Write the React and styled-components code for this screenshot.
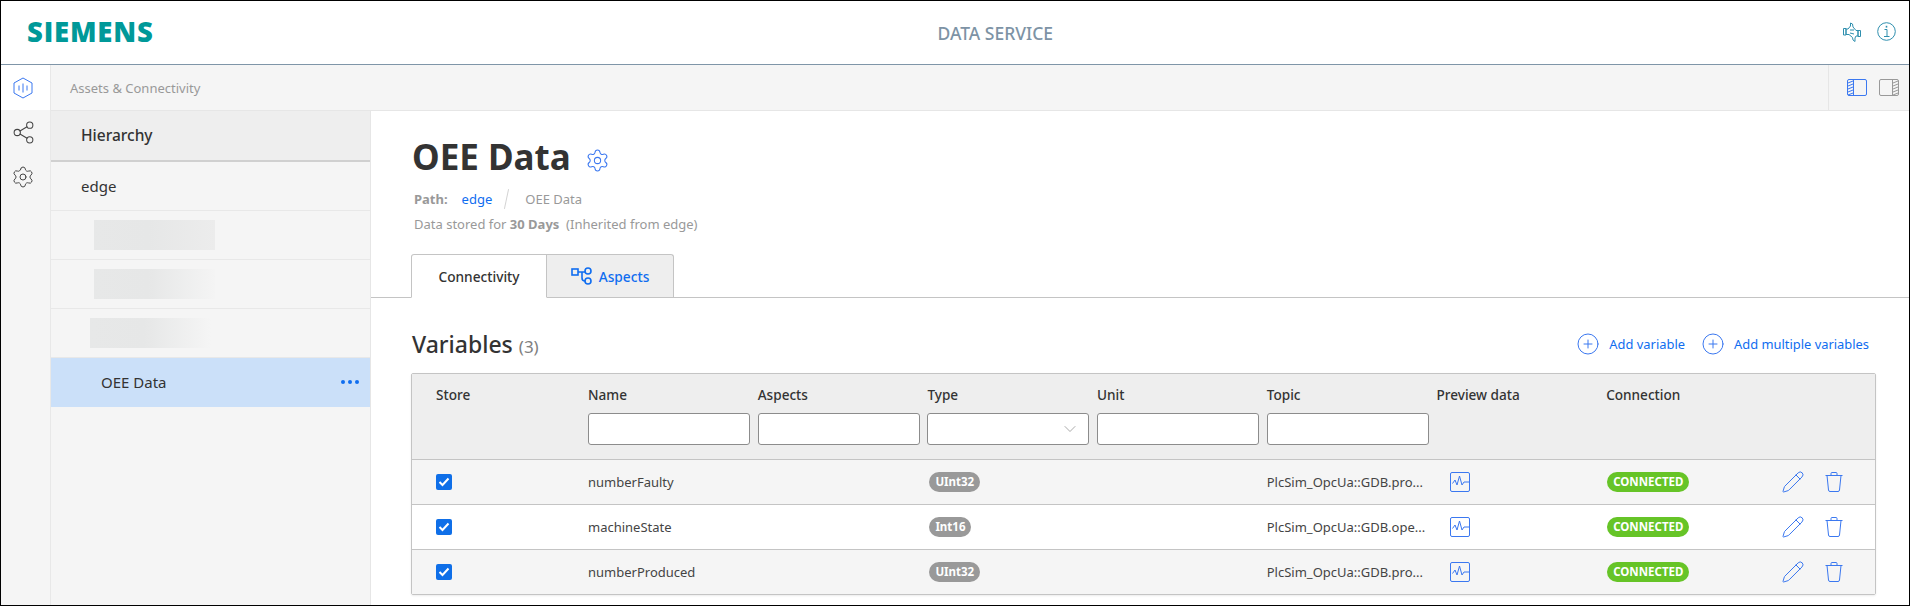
import React from 'react';
import styled, { createGlobalStyle } from 'styled-components';
import { ChevronDown, CirclePlus, Pencil, Settings, Share2 } from 'lucide-react';

const Global = createGlobalStyle`
  * { box-sizing: border-box; }
  html, body { margin: 0; padding: 0; background: #fff; }
  body { font-family: "Noto Sans", "Open Sans", sans-serif; color: #333; }
`;

const BLUE = '#0f6df0';
const LINE = '#c4c4c4';

const Frame = styled.div`
  width: 1910px;
  height: 606px;
  border: 1px solid #000;
  display: flex;
  flex-direction: column;
  overflow: hidden;
  background: #fff;
`;

const TopBar = styled.header`
  height: 64px;
  flex: none;
  border-bottom: 1px solid #7f95a8;
  display: flex;
  align-items: center;
  justify-content: space-between;
  padding: 0 13px 0 26px;
`;

const Logo = styled.div`
  font-family: "Open Sans", sans-serif;
  font-weight: 800;
  font-size: 27.5px;
  letter-spacing: 0.8px;
  color: #009999;
  line-height: 1;
  margin-top: -2px;
`;

const AppTitle = styled.div`
  font-size: 17.5px;
  font-weight: 500;
  color: #7d93a5;
  margin: 1px 6px 0 0;
`;

const TopIcons = styled.div`
  display: flex;
  align-items: center;
  gap: 16px;
  color: #2f8fae;
  margin-top: -2px;
`;

const Body = styled.div`
  flex: 1;
  display: flex;
  min-height: 0;
`;

const Rail = styled.nav`
  width: 50px;
  flex: none;
  background: #f5f5f5;
  border-right: 1px solid #e8e8e8;
  display: flex;
  flex-direction: column;
`;

const RailItem = styled.div`
  height: ${(p) => (p.$active ? '45px' : '44.5px')};
  display: flex;
  align-items: center;
  justify-content: center;
  padding-right: 5px;
  background: ${(p) => (p.$active ? '#fff' : 'transparent')};
  color: ${(p) => (p.$active ? '#3b78f0' : '#444')};
`;

const Workspace = styled.div`
  flex: 1;
  display: flex;
  flex-direction: column;
  min-width: 0;
`;

const SubBar = styled.div`
  height: 46px;
  flex: none;
  background: #f5f5f5;
  border-bottom: 1px solid #e6e6e6;
  display: flex;
  align-items: center;
  justify-content: space-between;
  padding-left: 19px;
  font-size: 13px;
  color: #999;
`;

const Toggles = styled.div`
  height: 100%;
  display: flex;
  align-items: center;
  gap: 12px;
  padding: 0 10px 0 18px;
  border-left: 1px solid #e6e6e6;
`;

const Columns = styled.div`
  flex: 1;
  display: flex;
  min-height: 0;
`;

const Sidebar = styled.aside`
  width: 320px;
  flex: none;
  background: #f5f5f5;
  border-right: 1px solid #e6e6e6;
`;

const SideHead = styled.div`
  height: 51px;
  background: #eee;
  border-bottom: 2px solid #d0d0d0;
  display: flex;
  align-items: center;
  padding: 0 0 1px 30px;
  font-size: 15.5px;
  font-weight: 500;
`;

const SideRow = styled.div`
  height: 49px;
  border-bottom: 1px solid #e8e8e8;
  display: flex;
  align-items: center;
  font-size: 15px;
  padding-left: ${(p) => p.$indent}px;
`;

const Blurred = styled.div`
  width: 121px;
  height: 30px;
  background: linear-gradient(90deg, #e7e8e8 0%, #e6e7e7 45%, ${(p) => p.$end} 100%);
`;

const SelectedRow = styled.div`
  height: 49px;
  background: #cbe0f9;
  display: flex;
  align-items: center;
  justify-content: space-between;
  padding: 0 11px 2px 50px;
  font-size: 15px;
`;

const Dots = styled.div`
  display: flex;
  gap: 3px;
  span {
    width: 4px;
    height: 4px;
    border-radius: 50%;
    background: ${BLUE};
  }
`;

const Main = styled.main`
  flex: 1;
  min-width: 0;
  display: flex;
  flex-direction: column;
`;

const Heading = styled.div`
  padding: 23px 0 0 41px;
`;

const TitleRow = styled.div`
  display: flex;
  align-items: center;
  gap: 14px;
  height: 46px;
  margin-bottom: 6px;
  svg { margin-top: 6px; }
`;

const Title = styled.h1`
  margin: 0;
  font-size: 35px;
  line-height: 46px;
  font-weight: 700;
  color: #333;
`;

const Meta = styled.div`
  display: flex;
  align-items: center;
  height: 25px;
  padding-left: 2px;
  font-size: 13px;
  color: #999;
  b { font-weight: 700; }
`;

const PathLink = styled.span`
  color: ${BLUE};
  margin-left: 14px;
`;

const Slash = styled.span`
  width: 1px;
  height: 20px;
  margin: 0 18px 0 14px;
  background: #d4d4d4;
  transform: rotate(12deg);
`;

const Tabs = styled.div`
  margin-top: 18px;
  padding-left: 40px;
  height: 44px;
  flex: none;
  border-bottom: 1px solid ${LINE};
  display: flex;
`;

const Tab = styled.div`
  height: ${(p) => (p.$active ? '44px' : '43px')};
  width: ${(p) => p.$width}px;
  display: flex;
  align-items: center;
  justify-content: center;
  gap: 6px;
  font-size: 13.7px;
  font-weight: 500;
  background: ${(p) => (p.$active ? '#fff' : '#eee')};
  color: ${(p) => (p.$active ? '#333' : BLUE)};
  border: 1px solid ${LINE};
  border-bottom: ${(p) => (p.$active ? `1px solid #fff` : 'none')};
  border-left: ${(p) => (p.$active ? `1px solid ${LINE}` : 'none')};
  border-radius: ${(p) => (p.$active ? '3px 0 0 0' : '0 3px 0 0')};
`;

const Section = styled.section`
  padding: 0 33px 0 40px;
`;

const SectionHead = styled.div`
  height: 75px;
  padding-top: 16px;
  display: flex;
  align-items: center;
  justify-content: space-between;
`;

const SectionTitle = styled.h2`
  margin: 0;
  padding-left: 1px;
  font-size: 23px;
  font-weight: 500;
  color: #333;
  span {
    font-size: 17px;
    font-weight: 400;
    color: #808080;
    margin-left: 6px;
  }
`;

const Actions = styled.div`
  display: flex;
  align-items: center;
  gap: 16px;
  padding-right: 7px;
`;

const Action = styled.div`
  display: flex;
  align-items: center;
  gap: 9px;
  font-size: 12.9px;
  color: ${BLUE};
  svg { color: #3b78f0; }
`;

const Table = styled.div`
  border: 1px solid ${LINE};
  border-radius: 2px;
  box-shadow: 0 1px 2px rgba(0, 0, 0, 0.08);
`;

const Cols = styled.div`
  display: grid;
  grid-template-columns: 176px repeat(7, 169.7px) 1fr;
  align-items: center;
`;

const HeadGrid = styled(Cols)`
  height: 85px;
  background: #eee;
  align-items: start;
  padding-top: 11px;
`;

const HeadCell = styled.div`
  display: flex;
  flex-direction: column;
  gap: 8px;
  padding-left: ${(p) => (p.$first ? 24 : 0)}px;
  font-size: 13.6px;
  line-height: 20px;
  font-weight: 500;
`;

const FilterInput = styled.div`
  width: 162px;
  height: 32px;
  background: #fff;
  border: 1px solid #8c8c8c;
  border-radius: 3px;
  display: flex;
  align-items: center;
  justify-content: flex-end;
  padding-right: 8px;
  color: #999;
`;

const DataRow = styled(Cols)`
  height: 45px;
  border-top: 1px solid ${LINE};
  background: ${(p) => (p.$odd ? '#f5f5f5' : '#fff')};
  font-size: 13px;
  color: #444;
`;

const StoreCell = styled.div`
  padding-left: 24px;
  display: flex;
`;

const Check = styled.div`
  width: 16px;
  height: 16px;
  border-radius: 2px;
  background: #0f6fe8;
  display: flex;
  align-items: center;
  justify-content: center;
`;

const Pill = styled.span`
  display: inline-block;
  height: 20px;
  line-height: 20px;
  padding: 0 6px;
  border-radius: 10px;
  font-size: 11.5px;
  font-weight: 700;
  color: #fff;
  background: ${(p) => p.$color};
`;

const PillCell = styled.div`
  display: flex;
  padding-left: ${(p) => p.$indent}px;
`;

const PreviewCell = styled.div`
  padding-left: 14px;
  display: flex;
  color: #3b78f0;
`;

const RowIcons = styled.div`
  display: flex;
  align-items: center;
  gap: 20px;
  padding-left: 5px;
  color: #3b78f0;
`;

const HexIcon = () => (
  <svg width="20" height="22" viewBox="0 0 20 22" fill="none" stroke="currentColor" strokeWidth="1">
    <path d="M10 1 L19 6 V16 L10 21 L1 16 V6 Z" />
    <path d="M6 8.5 V13.5 M10 6.5 V15.5 M14 8.5 V13.5" />
  </svg>
);

const PanelIcon = ({ side, color }) => (
  <svg width="20" height="17" viewBox="0 0 20 17" fill="none" stroke={color} strokeWidth="1">
    <rect x="0.5" y="0.5" width="19" height="16" rx="1.5" />
    <path d={side === 'left' ? 'M6.5 0.5 V16.5' : 'M13.5 0.5 V16.5'} />
    <path
      d={side === 'left'
        ? 'M1 4 L6 2 M1 7 L6 5 M1 10 L6 8 M1 13 L6 11 M1 16 L6 14'
        : 'M14 4 L19 2 M14 7 L19 5 M14 10 L19 8 M14 13 L19 11 M14 16 L19 14'}
    />
  </svg>
);

const HandsIcon = () => (
  <svg width="18" height="20" viewBox="0 0 18 20" fill="none" stroke="currentColor" strokeWidth="1">
    <path d="M3 7 H5 L7.5 4 V1 L9.5 2 L10 5 L13 8.5 H15 V14 H13 L12 16 V19.5 L10 18 L9.5 15.5 L6 12.5 H3 Z" />
    <path d="M0.5 6.5 H3 V13 H0.5 Z M15 8.5 H17.5 V14.5 H15 Z" />
    <path d="M7 8 L11 8 M7 11 L11 12" />
  </svg>
);

const InfoIcon = () => (
  <svg width="19" height="19" viewBox="0 0 19 19" fill="none" stroke="currentColor" strokeWidth="1">
    <circle cx="9.5" cy="9.5" r="8.8" />
    <path d="M7.5 7.5 H10 V14 M7 14.5 H12.5" />
    <path d="M9.5 3.8 V5.6" strokeWidth="1.6" />
  </svg>
);

const LinksIcon = () => (
  <svg width="22" height="18" viewBox="0 0 22 18" fill="none" stroke="currentColor" strokeWidth="1.6">
    <rect x="1" y="2" width="6" height="6" />
    <circle cx="17" cy="4" r="3" />
    <circle cx="17" cy="14" r="3" />
    <path d="M7 5 H14 M11 5 V11 Q11 14 14 14" />
  </svg>
);

const ChartIcon = () => (
  <svg width="20" height="20" viewBox="0 0 20 20" fill="none" stroke="currentColor" strokeWidth="1">
    <rect x="0.5" y="0.5" width="19" height="19" rx="1.5" />
    <path d="M2.5 11.5 L5 8 L7 13 L9.5 4 L12 13 L14 10 H19" />
  </svg>
);

const TrashIcon = () => (
  <svg width="18" height="20" viewBox="0 0 18 20" fill="none" stroke="currentColor" strokeWidth="1">
    <path d="M0.5 3.5 H17.5 M6 3.5 V1.5 Q6 0.5 7 0.5 H11 Q12 0.5 12 1.5 V3.5" />
    <path d="M2 3.5 L3.5 18 Q3.6 19.5 5 19.5 H13 Q14.4 19.5 14.5 18 L16 3.5" />
  </svg>
);

const CheckMark = () => (
  <svg width="12" height="10" viewBox="0 0 12 10" fill="none" stroke="#fff" strokeWidth="2">
    <path d="M1.5 5 L4.5 8 L10.5 1.5" />
  </svg>
);

const columns = ['Name', 'Aspects', 'Type', 'Unit', 'Topic'];

const variables = [
  { name: 'numberFaulty', type: 'UInt32', topic: 'PlcSim_OpcUa::GDB.pro...' },
  { name: 'machineState', type: 'Int16', topic: 'PlcSim_OpcUa::GDB.ope...' },
  { name: 'numberProduced', type: 'UInt32', topic: 'PlcSim_OpcUa::GDB.pro...' },
];

export default function App() {
  return (
    <Frame>
      <Global />
      <TopBar>
        <Logo>SIEMENS</Logo>
        <AppTitle>DATA SERVICE</AppTitle>
        <TopIcons>
          <HandsIcon />
          <InfoIcon />
        </TopIcons>
      </TopBar>
      <Body>
        <Rail>
          <RailItem $active><HexIcon /></RailItem>
          <RailItem><Share2 size={25} strokeWidth={1} /></RailItem>
          <RailItem><Settings size={24} strokeWidth={1} /></RailItem>
        </Rail>
        <Workspace>
          <SubBar>
            Assets &amp; Connectivity
            <Toggles>
              <PanelIcon side="left" color="#3b78f0" />
              <PanelIcon side="right" color="#999" />
            </Toggles>
          </SubBar>
          <Columns>
            <Sidebar>
              <SideHead>Hierarchy</SideHead>
              <SideRow $indent={30}>edge</SideRow>
              <SideRow $indent={43}><Blurred $end="#ececec" /></SideRow>
              <SideRow $indent={43}><Blurred $end="#f4f4f4" /></SideRow>
              <SideRow $indent={39}><Blurred $end="#f5f5f5" /></SideRow>
              <SelectedRow>
                OEE Data
                <Dots><span /><span /><span /></Dots>
              </SelectedRow>
            </Sidebar>
            <Main>
              <Heading>
                <TitleRow>
                  <Title>OEE Data</Title>
                  <Settings size={25} strokeWidth={1} color="#3b78f0" />
                </TitleRow>
                <Meta>
                  <b>Path:</b>
                  <PathLink>edge</PathLink>
                  <Slash />
                  OEE Data
                </Meta>
                <Meta>
                  Data stored for&nbsp;<b>30 Days</b>&nbsp;&nbsp;(Inherited from edge)
                </Meta>
              </Heading>
              <Tabs>
                <Tab $active $width={136}>Connectivity</Tab>
                <Tab $width={127}><LinksIcon />Aspects</Tab>
              </Tabs>
              <Section>
                <SectionHead>
                  <SectionTitle>Variables<span>(3)</span></SectionTitle>
                  <Actions>
                    <Action><CirclePlus size={24} strokeWidth={1} />Add variable</Action>
                    <Action><CirclePlus size={24} strokeWidth={1} />Add multiple variables</Action>
                  </Actions>
                </SectionHead>
                <Table>
                  <HeadGrid>
                    <HeadCell $first>Store</HeadCell>
                    {columns.map((col) => (
                      <HeadCell key={col}>
                        {col}
                        <FilterInput>
                          {col === 'Type' && <ChevronDown size={20} strokeWidth={1} />}
                        </FilterInput>
                      </HeadCell>
                    ))}
                    <HeadCell>Preview data</HeadCell>
                    <HeadCell>Connection</HeadCell>
                  </HeadGrid>
                  {variables.map((item, index) => (
                    <DataRow key={item.name} $odd={index % 2 === 0}>
                      <StoreCell><Check><CheckMark /></Check></StoreCell>
                      <div>{item.name}</div>
                      <div />
                      <PillCell $indent={2}><Pill $color="#999">{item.type}</Pill></PillCell>
                      <div />
                      <div>{item.topic}</div>
                      <PreviewCell><ChartIcon /></PreviewCell>
                      <PillCell $indent={1}><Pill $color="#66c427">CONNECTED</Pill></PillCell>
                      <RowIcons>
                        <Pencil size={24} strokeWidth={1} />
                        <TrashIcon />
                      </RowIcons>
                    </DataRow>
                  ))}
                </Table>
              </Section>
            </Main>
          </Columns>
        </Workspace>
      </Body>
    </Frame>
  );
}
